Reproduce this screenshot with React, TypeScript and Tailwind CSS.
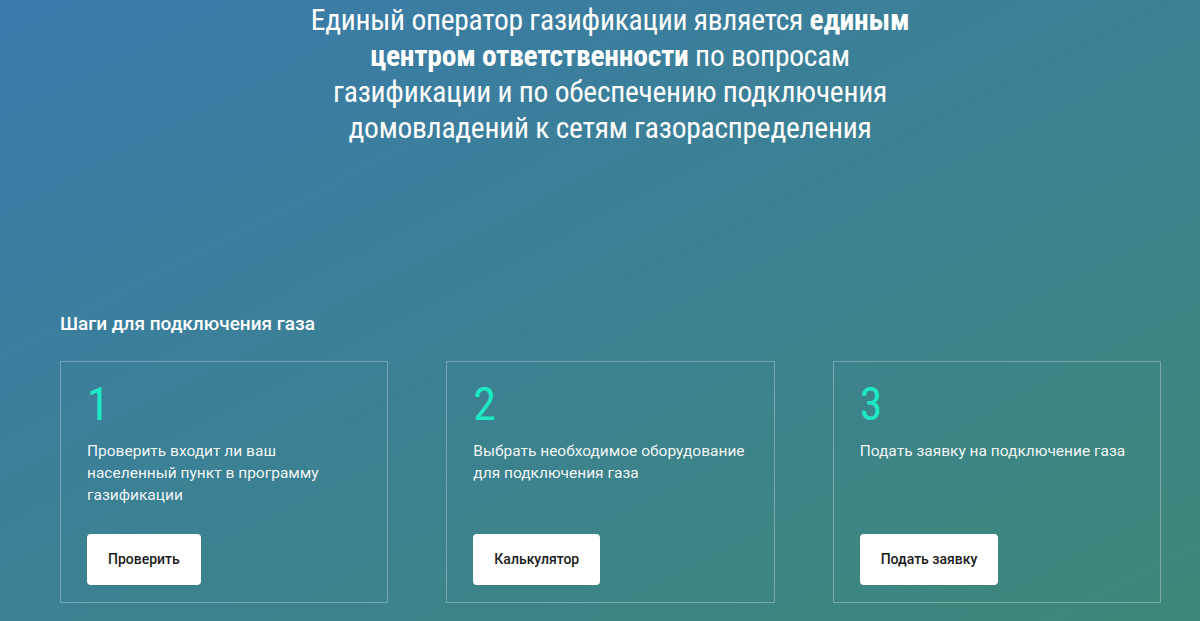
import React from "react";

const steps = [
  {
    n: "1",
    text: "Проверить входит ли ваш населенный пункт в программу газификации",
    btn: "Проверить",
  },
  {
    n: "2",
    text: "Выбрать необходимое оборудование для подключения газа",
    btn: "Калькулятор",
  },
  {
    n: "3",
    text: "Подать заявку на подключение газа",
    btn: "Подать заявку",
  },
];

export default function App() {
  return (
    <div className="w-[1200px] h-[621px] overflow-hidden bg-[linear-gradient(to_bottom_right,#3a7aac,#3e8878)] text-white font-['Roboto',sans-serif]">
      <div className="pt-[2px] flex justify-center">
        <p className="text-center text-[29.5px] leading-[36px] font-normal font-['Roboto_Condensed','Liberation_Sans_Narrow','Arial_Narrow',sans-serif] tracking-[-0.25px] pl-[20px]">
          Единый оператор газификации является <b className="font-bold">единым</b>
          <br />
          <b className="font-bold">центром ответственности</b> по вопросам
          <br />
          газификации и по обеспечению подключения
          <br />
          домовладений к сетям газораспределения
        </p>
      </div>
      <div className="mt-[166px] px-[60px]">
        <h2 className="text-[19px] leading-[24px] font-medium">Шаги для подключения газа</h2>
        <div className="mt-[25px] grid grid-cols-3 gap-[58px] w-[1101px]">
          {steps.map((s) => (
            <div
              key={s.n}
              className="h-[242px] border border-white/30 pl-[26px] pr-[20px] pt-[18px] pb-[17px] flex flex-col"
            >
              <div className="text-[46px] leading-[48px] font-normal font-['Roboto_Condensed','Roboto',sans-serif] text-[#1de9c4]">
                {s.n}
              </div>
              <p className="mt-[12px] w-[276px] text-[15.5px] leading-[22px] text-white/95">{s.text}</p>
              <div className="mt-auto">
                <button className="h-[51px] px-[21px] bg-white rounded-[4px] text-[14px] font-medium text-[#1b1b1b]">
                  {s.btn}
                </button>
              </div>
            </div>
          ))}
        </div>
      </div>
    </div>
  );
}
